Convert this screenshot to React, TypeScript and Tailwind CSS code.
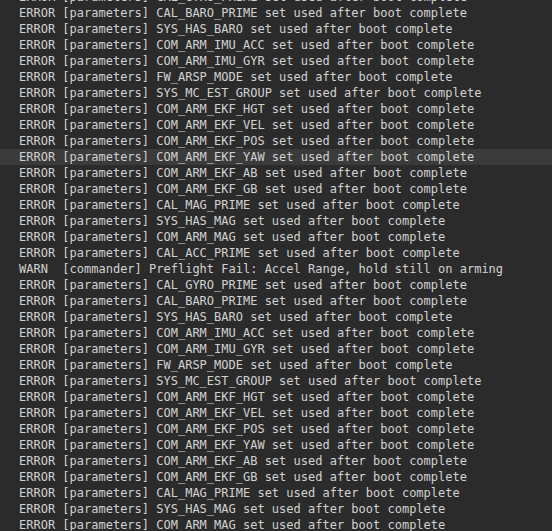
const params = [
  'CAL_GYRO_PRIME',
  'CAL_BARO_PRIME',
  'SYS_HAS_BARO',
  'COM_ARM_IMU_ACC',
  'COM_ARM_IMU_GYR',
  'FW_ARSP_MODE',
  'SYS_MC_EST_GROUP',
  'COM_ARM_EKF_HGT',
  'COM_ARM_EKF_VEL',
  'COM_ARM_EKF_POS',
  'COM_ARM_EKF_YAW',
  'COM_ARM_EKF_AB',
  'COM_ARM_EKF_GB',
  'CAL_MAG_PRIME',
  'SYS_HAS_MAG',
  'COM_ARM_MAG',
  'CAL_ACC_PRIME',
];

const lines: string[] = [
  ...params.map((p) => `ERROR [parameters] ${p} set used after boot complete`),
  'WARN  [commander] Preflight Fail: Accel Range, hold still on arming',
  ...params.map((p) => `ERROR [parameters] ${p} set used after boot complete`),
];

export default function App() {
  return (
    <div className="h-[531px] w-[552px] overflow-hidden bg-[#2b2b2b]">
      <div
        className="-mt-[11px] text-[12px] leading-[16px] text-[#d2d2d2]"
        style={{ fontFamily: '"DejaVu Sans Mono", monospace' }}
      >
        {lines.map((line, i) => (
          <div
            key={i}
            className={i === 10 ? 'h-4 whitespace-pre bg-[#3b3b3b] pl-[19px]' : 'h-4 whitespace-pre pl-[19px]'}
          >
            {line}
          </div>
        ))}
      </div>
    </div>
  );
}
